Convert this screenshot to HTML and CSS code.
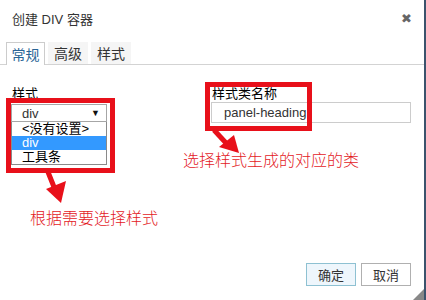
FILE: index.html
```html
<!DOCTYPE html>
<html lang="zh-CN">
  <head>
    <meta charset="UTF-8" />
    <meta name="viewport" content="width=device-width, initial-scale=1.0" />
    <title>创建 DIV 容器</title>
    <link rel="stylesheet" href="styles.css">
  </head>
  <body>
    <div class="dialog">
      <div class="dialog-header">
        <span class="dialog-title">创建 DIV 容器</span>
        <span class="dialog-close">&#x2716;</span>
      </div>

      <div class="tabs">
        <div class="tab active">常规</div>
        <div class="tab">高级</div>
        <div class="tab">样式</div>
      </div>

      <div class="dialog-body">
        <div class="field field-style">
          <label>样式</label>
          <div class="select">
            <span>div</span>
            <span class="select-arrow">&#9660;</span>
          </div>
          <ul class="select-list">
            <li>&lt;没有设置&gt;</li>
            <li class="selected">div</li>
            <li>工具条</li>
          </ul>
        </div>
        <div class="field field-class">
          <label>样式类名称</label>
          <input type="text" class="text-input" value="panel-heading" />
        </div>
      </div>

      <div class="dialog-footer">
        <button class="btn btn-ok">确定</button>
        <button class="btn">取消</button>
      </div>

      <div class="resize-grip"></div>

      <!-- annotations drawn over the dialog -->
      <div class="mark mark-left"></div>
      <div class="mark mark-right"></div>
      <svg class="arrows" width="426" height="300" viewBox="0 0 426 300">
        <line x1="48" y1="172" x2="54" y2="187" stroke="#e8101a" stroke-width="5" />
        <polygon points="46,189 66,181 61,203" fill="#e8101a" />
        <line x1="214" y1="130" x2="226" y2="143" stroke="#e8101a" stroke-width="5" />
        <polygon points="219,147 234,135 239,153" fill="#e8101a" />
      </svg>
      <div class="note note-left">根据需要选择样式</div>
      <div class="note note-right">选择样式生成的对应的类</div>
    </div>
  </body>
</html>
```

FILE: styles.css
```css
body {
  margin: 0;
  padding: 0;
  font-family: "Liberation Sans", "Noto Sans CJK SC", sans-serif;
  background-color: #fff;
  color: #333;
}
.dialog {
  position: relative;
  width: 426px;
  height: 300px;
  box-sizing: border-box;
  border-right: 2px solid #3b536d;
  display: flex;
  flex-direction: column;
  overflow: hidden;
}
.dialog-header {
  height: 36px;
  display: flex;
  align-items: center;
  justify-content: space-between;
  padding: 0 12px 0 12px;
}
.dialog-title {
  font-size: 13px;
  color: #333;
}
.dialog-close {
  font-size: 13px;
  color: #666;
  font-family: "DejaVu Sans", sans-serif;
}
.tabs {
  margin-top: 6px;
  height: 22px;
  display: flex;
  gap: 3px;
  padding-left: 6px;
  border-bottom: 1px solid #d3d3d3;
}
.tab {
  width: 40px;
  height: 22px;
  box-sizing: border-box;
  display: flex;
  align-items: center;
  justify-content: center;
  font-size: 14px;
  color: #333;
  background-color: #f5f5f5;
}
.tab.active {
  width: 39px;
  height: 23px;
  background-color: #fff;
  color: #2a6496;
  border: 1px solid #ccc;
  border-bottom: none;
}
.dialog-body {
  flex: 1;
  display: flex;
  padding: 21px 0 0 11px;
}
.field label {
  display: block;
  font-size: 13px;
  line-height: 15px;
  color: #000;
  padding-left: 1px;
}
.field-style {
  width: 96px;
}
.select {
  margin-top: 3px;
  height: 18px;
  box-sizing: border-box;
  border: 1px solid #a6a6a6;
  display: flex;
  align-items: center;
  justify-content: space-between;
  padding: 0 6px 0 10px;
  font-size: 13px;
  color: #333;
}
.select-arrow {
  font-size: 9px;
  color: #111;
}
.select-list {
  list-style: none;
  margin: 0;
  padding: 0;
  border: 1px solid #8a8a8a;
  border-top: none;
}
.select-list li {
  height: 14px;
  line-height: 14px;
  font-size: 13px;
  color: #000;
  padding-left: 10px;
}
.select-list li.selected {
  background-color: #3399ff;
  color: #fff;
}
.field-class {
  margin-left: 104px;
  width: 200px;
}
.text-input {
  display: block;
  margin-top: 1px;
  width: 200px;
  height: 21px;
  box-sizing: border-box;
  border: 1px solid #ccc;
  padding: 0 0 0 12px;
  font-family: "Liberation Sans", sans-serif;
  font-size: 13px;
  color: #333;
}
.dialog-footer {
  display: flex;
  justify-content: flex-end;
  gap: 5px;
  padding: 0 13px 14px 0;
}
.btn {
  width: 50px;
  height: 23px;
  font-family: "Noto Sans CJK SC", sans-serif;
  font-size: 13px;
  color: #333;
  background-color: #fff;
  border: 1px solid #b0b0b0;
  padding: 0;
}
.btn-ok {
  background-color: #eef6fc;
  border-color: #8ec1d2;
}
.resize-grip {
  position: absolute;
  right: 0;
  bottom: 0;
  width: 0;
  height: 0;
  border-left: 11px solid transparent;
  border-bottom: 11px solid #888;
}
.mark {
  position: absolute;
  border: 5px solid #e8101a;
  box-sizing: border-box;
}
.mark-left {
  left: 6px;
  top: 98px;
  width: 109px;
  height: 75px;
}
.mark-right {
  left: 205px;
  top: 82px;
  width: 107px;
  height: 49px;
}
.arrows {
  position: absolute;
  left: 0;
  top: 0;
}
.note {
  position: absolute;
  font-family: "Noto Sans CJK SC", sans-serif;
  font-size: 16px;
  font-weight: 300;
  line-height: 20px;
  color: #e3191e;
}
.note-left {
  left: 30px;
  top: 207px;
}
.note-right {
  left: 183px;
  top: 149px;
}
```
